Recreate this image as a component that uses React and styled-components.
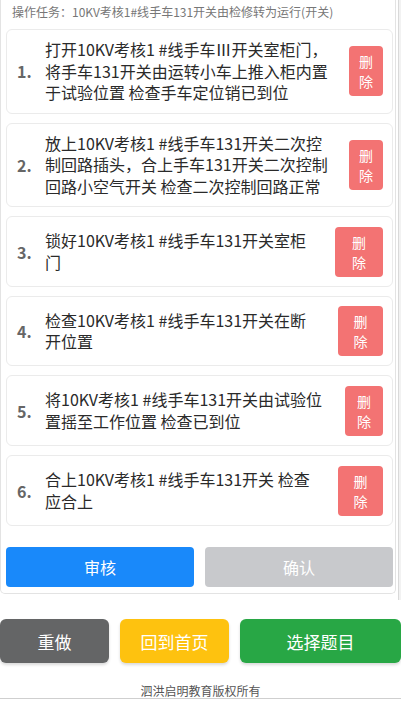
import React from "react";
import styled, { createGlobalStyle } from "styled-components";

const Global = createGlobalStyle`
  html, body { margin: 0; padding: 0; background: #fff; }
  body { font-family: "Noto Sans CJK SC", "Noto Sans", sans-serif; }
  * { box-sizing: border-box; }
`;

const Page = styled.div`
  width: 401px;
  height: 701px;
  overflow: hidden;
  background: #fff;
`;

const TopArea = styled.div`
  width: 401px;
  background: #f2f2f2;
`;

const TopInner = styled.div`
  width: 399px;
  background: #fff;
  border-right: 1px solid #d9d9d9;
  padding-bottom: 6px;
`;

const Panel = styled.div`
  width: 396px;
  border: 1px solid #e3e3e3;
  border-top: none;
  border-radius: 0 0 5px 5px;
  padding: 0 2px 6px 5px;
`;

const Title = styled.div`
  font-size: 12px;
  line-height: 24px;
  height: 24px;
  color: #777;
  padding-left: 6px;
  margin-bottom: 5px;
  white-space: nowrap;
`;

const List = styled.div`
  display: flex;
  flex-direction: column;
  gap: 9px;
`;

const Card = styled.div`
  display: flex;
  align-items: center;
  border: 1px solid #ebebeb;
  border-radius: 6px;
  padding: 9px 9px 9px 10px;
  min-height: ${(p) => p.$h}px;
`;

const Num = styled.div`
  flex: none;
  width: 28px;
  font-size: 16px;
  font-weight: 700;
  color: #666;
`;

const Text = styled.div`
  flex: none;
  width: ${(p) => p.$w}px;
  font-size: 16px;
  line-height: 21.5px;
  color: #2a2a2a;
`;

const Del = styled.div`
  flex: none;
  margin-left: auto;
  width: ${(p) => p.$w}px;
  padding: 5px ${(p) => (p.$w - 15) / 2}px;
  background: #f37373;
  color: #fff;
  font-size: 14px;
  line-height: 20px;
  border-radius: 4px;
  text-align: center;
  word-break: break-all;
`;

const ActionRow = styled.div`
  display: flex;
  gap: 11px;
  margin-top: 21px;
`;

const ActionBtn = styled.div`
  flex: 1;
  height: 40px;
  border-radius: 4px;
  background: ${(p) => p.$bg};
  color: #fff;
  font-size: 16px;
  display: flex;
  align-items: center;
  justify-content: center;
`;

const BottomRow = styled.div`
  display: flex;
  gap: 11px;
  margin-top: 19px;
`;

const BigBtn = styled.div`
  flex: none;
  width: ${(p) => p.$w}px;
  height: 44px;
  border-radius: 6px;
  background: ${(p) => p.$bg};
  color: #fff;
  font-size: 17px;
  display: flex;
  align-items: center;
  justify-content: center;
  box-shadow: 0 2px 3px rgba(0, 0, 0, 0.15);
`;

const Footer = styled.div`
  height: 36px;
  padding-top: 20px;
  font-size: 12px;
  line-height: 15px;
  color: #555;
  text-align: center;
  border-bottom: 1px solid #cfcfcf;
`;

const steps = [
  { n: "1.", t: "打开10KV考核1 #线手车Ⅲ开关室柜门，将手车131开关由运转小车上推入柜内置于试验位置 检查手车定位销已到位", tw: 290, bw: 34, h: 84 },
  { n: "2.", t: "放上10KV考核1 #线手车131开关二次控制回路插头，合上手车131开关二次控制回路小空气开关 检查二次控制回路正常", tw: 290, bw: 34, h: 84 },
  { n: "3.", t: "锁好10KV考核1 #线手车131开关室柜门", tw: 270, bw: 48, h: 71 },
  { n: "4.", t: "检查10KV考核1 #线手车131开关在断开位置", tw: 272, bw: 45, h: 70 },
  { n: "5.", t: "将10KV考核1 #线手车131开关由试验位置摇至工作位置 检查已到位", tw: 288, bw: 38, h: 71 },
  { n: "6.", t: "合上10KV考核1 #线手车131开关 检查应合上", tw: 276, bw: 45, h: 71 },
];

export default function App() {
  return (
    <Page>
      <Global />
      <TopArea>
        <TopInner>
          <Panel>
            <Title>操作任务：10KV考核1#线手车131开关由检修转为运行(开关)</Title>
            <List>
              {steps.map((s) => (
                <Card key={s.n} $h={s.h}>
                  <Num>{s.n}</Num>
                  <Text $w={s.tw}>{s.t}</Text>
                  <Del $w={s.bw}>删除</Del>
                </Card>
              ))}
            </List>
            <ActionRow>
              <ActionBtn $bg="#1989fa">审核</ActionBtn>
              <ActionBtn $bg="#c8c9cc">确认</ActionBtn>
            </ActionRow>
          </Panel>
        </TopInner>
      </TopArea>
      <BottomRow>
        <BigBtn $w={109} $bg="#646566">重做</BigBtn>
        <BigBtn $w={109} $bg="#fec20f">回到首页</BigBtn>
        <BigBtn $w={161} $bg="#28a745">选择题目</BigBtn>
      </BottomRow>
      <Footer>泗洪启明教育版权所有</Footer>
    </Page>
  );
}
